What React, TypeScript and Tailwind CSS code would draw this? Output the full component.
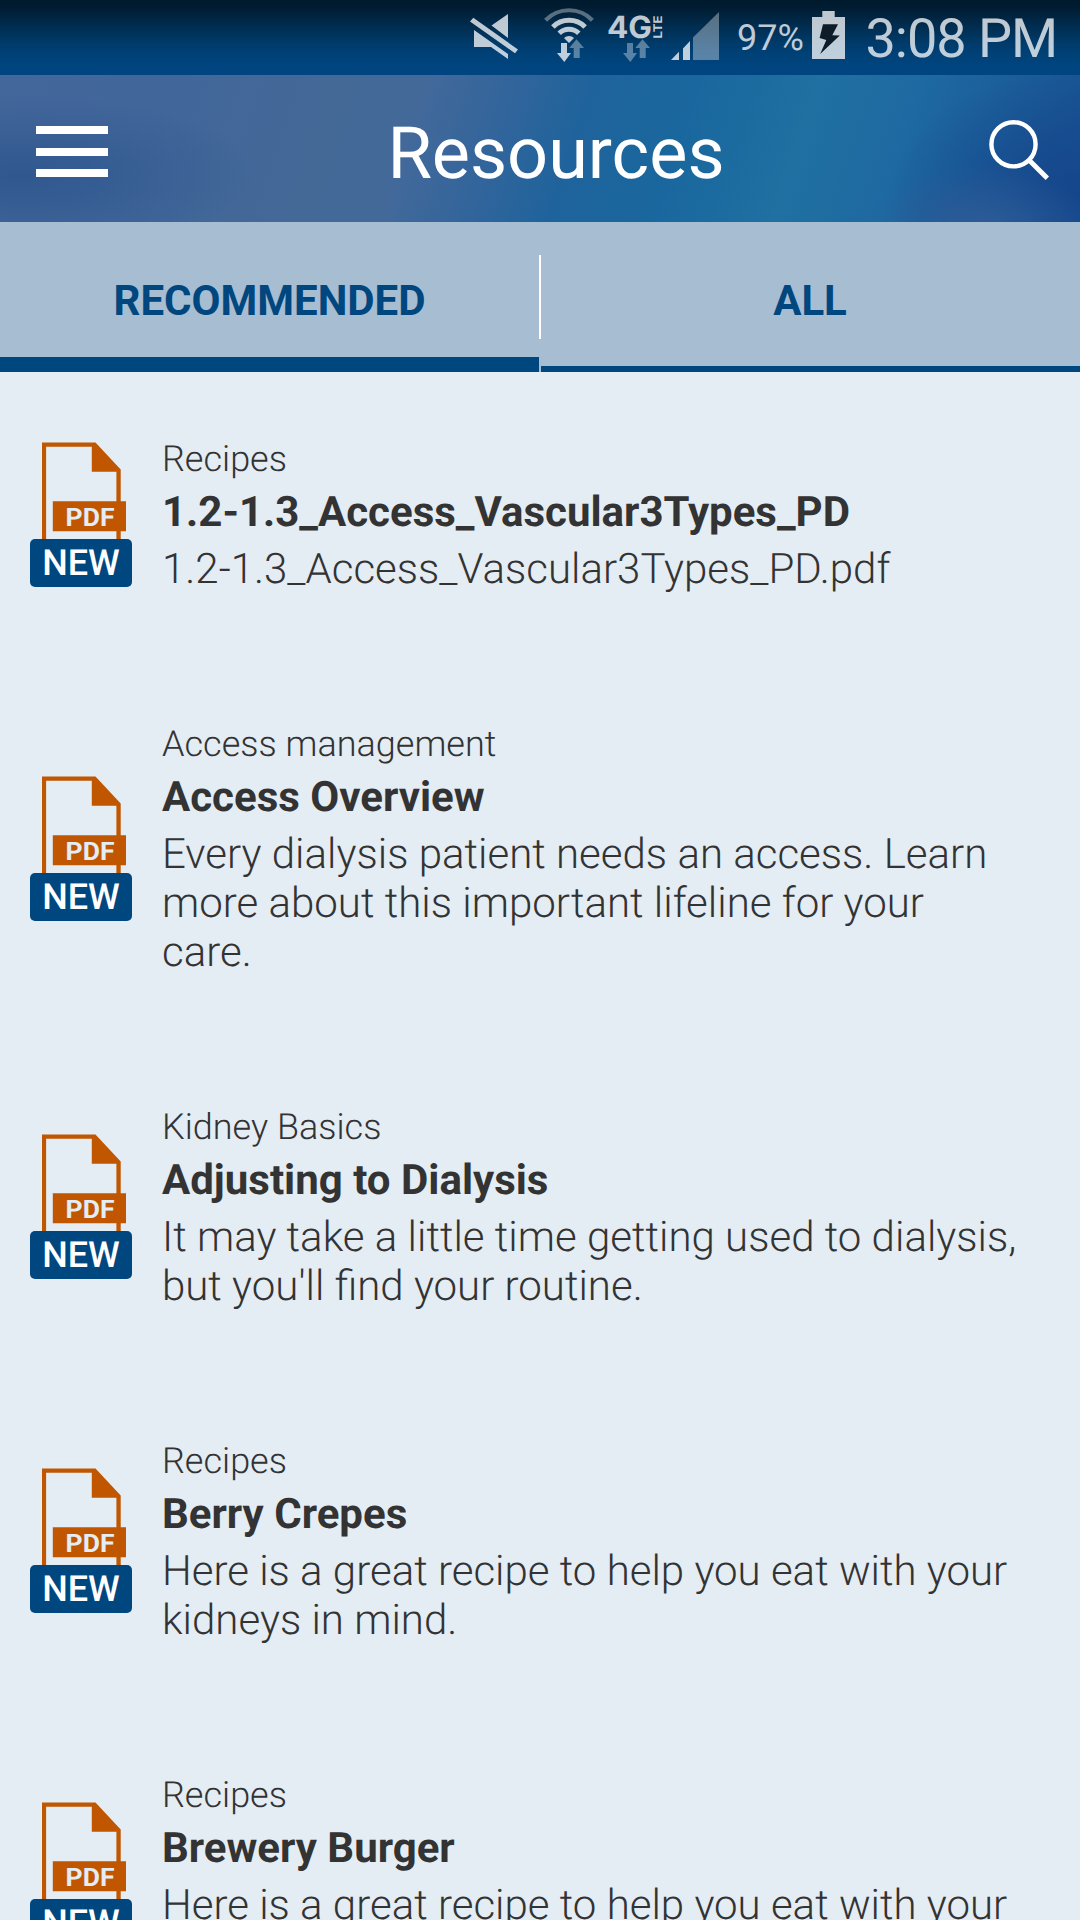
import React from "react";

type Resource = { category: string; title: string; description: string };

const resources: Resource[] = [
  {
    category: "Recipes",
    title: "1.2-1.3_Access_Vascular3Types_PD",
    description: "1.2-1.3_Access_Vascular3Types_PD.pdf",
  },
  {
    category: "Access management",
    title: "Access Overview",
    description:
      "Every dialysis patient needs an access. Learn more about this important lifeline for your care.",
  },
  {
    category: "Kidney Basics",
    title: "Adjusting to Dialysis",
    description: "It may take a little time getting used to dialysis, but you'll find your routine.",
  },
  {
    category: "Recipes",
    title: "Berry Crepes",
    description: "Here is a great recipe to help you eat with your kidneys in mind.",
  },
  {
    category: "Recipes",
    title: "Brewery Burger",
    description: "Here is a great recipe to help you eat with your kidneys in mind.",
  },
];

function MuteIcon() {
  return (
    <svg width="50" height="75" viewBox="470 0 50 75" className="shrink-0 fill-white/75">
      <path d="M508 14V38L491.5 25.5ZM474 30L508 54V59L491 47H474ZM473.3 17.8L518 49.5L515 53.2L470 21.6Z" />
    </svg>
  );
}

function DataArrows({ x, downActive }: { x: number; downActive: boolean }) {
  return (
    <g transform={`translate(${x} 0)`}>
      <path
        d="M4 43H10V53H14L7.3 62L0 53H4Z"
        className={downActive ? "fill-white/75" : "fill-white/35"}
      />
      <path d="M19.5 39.3L27 48H22.7V58H16.7V48H12.3Z" className="fill-white/35" />
    </g>
  );
}

function WifiIcon() {
  return (
    <svg width="52" height="75" viewBox="543 0 52 75" className="shrink-0 fill-none">
      <path d="M545.6 20.2A32.5 32.5 0 0 1 592.4 20.2" className="stroke-white/35" strokeWidth="4.2" />
      <path d="M552.9 26.9A22.8 22.8 0 0 1 585.1 26.9" className="stroke-white/75" strokeWidth="5" />
      <path d="M559.2 33.2A14 14 0 0 1 578.8 33.2" className="stroke-white/75" strokeWidth="5" />
      <path d="M564 38A7 7 0 0 1 574 38L569 43Z" className="fill-white/75" />
      <DataArrows x={557} downActive />
    </svg>
  );
}

function NetworkIcon() {
  return (
    <svg width="58" height="75" viewBox="606 0 58 75" className="shrink-0">
      <text
        x="607"
        y="37.8"
        fontSize="30.5"
        fontWeight="700"
        fontFamily="Inter, sans-serif"
        textLength="45"
        lengthAdjust="spacingAndGlyphs"
        className="fill-white/75"
      >
        4G
      </text>
      <text
        transform="translate(662 38.5) rotate(-90)"
        fontSize="12"
        fontWeight="700"
        fontFamily="Inter, sans-serif"
        textLength="23"
        lengthAdjust="spacingAndGlyphs"
        className="fill-white/75"
      >
        LTE
      </text>
      <DataArrows x={623} downActive={false} />
    </svg>
  );
}

function SignalIcon() {
  return (
    <svg width="49" height="75" viewBox="671 0 49 75" className="shrink-0">
      <path d="M671 60L679 51.7V60ZM683 60V48.5L690 41V60Z" className="fill-white/75" />
      <path d="M693 60V37.5L719 12V60Z" className="fill-white/35" />
    </svg>
  );
}

function BatteryIcon() {
  return (
    <svg width="33" height="75" viewBox="812 0 33 75" className="shrink-0">
      <path d="M812 17H822.3V11H834.7V17H845V59H812Z" className="fill-white/75" />
      <path d="M823 24.2H838L832.3 35.3L839.8 35.6L820.2 54L826.3 40L819.6 38Z" fill="#0e1b28" />
    </svg>
  );
}

function StatusBar() {
  return (
    <div className="flex h-[75px] items-start bg-[linear-gradient(180deg,#001a2d_0px,#001c31_7px,#002a4b_23px,#003a68_42px,#004177_54px,#00457f_66px,#00457f_75px)] pl-[470px] text-white/75">
      <MuteIcon />
      <div className="w-[23px]" />
      <WifiIcon />
      <div className="w-[11px]" />
      <NetworkIcon />
      <div className="w-[7px]" />
      <SignalIcon />
      <span className="ml-[17px] mt-[17px] w-[75px] whitespace-nowrap text-[36px] leading-[42px]">97%</span>
      <BatteryIcon />
      <span className="ml-[20.5px] mt-[8px] whitespace-nowrap text-[54px] leading-[63px] tracking-[-1px]">3:08 PM</span>
    </div>
  );
}

function Header() {
  return (
    <header className="flex h-[147px] items-center bg-[radial-gradient(ellipse_110px_60px_at_980px_150px,#2d5b97_0%,#2d5b9700_100%),radial-gradient(ellipse_190px_120px_at_1080px_115px,#15468b_0%,#15468b00_100%),radial-gradient(ellipse_240px_80px_at_20px_100px,#30588f_0%,#30588f00_100%),linear-gradient(108deg,#43679a_0%,#41669a_15%,#446997_30%,#43699a_38%,#33659b_45%,#1f639c_53%,#19679e_62%,#2070a2_73%,#1e69a1_82%,#184f91_100%)] pl-9 pr-[29px] text-white">
      <button aria-label="Menu" className="mt-1.5 flex w-[72px] flex-col gap-[13.5px]">
        <span className="h-2 bg-white" />
        <span className="h-2 bg-white" />
        <span className="h-2 bg-white" />
      </button>
      <h1 className="mt-2.5 flex-1 pl-[17px] text-center text-[72px] leading-[84px]">Resources</h1>
      <button aria-label="Search" className="mt-[3px]">
        <svg width="64" height="64" viewBox="987 118 64 64" className="fill-none stroke-white">
          <circle cx="1013.5" cy="144.3" r="22.1" strokeWidth="4.4" />
          <path d="M1029 160L1047.3 178.3" strokeWidth="4.8" />
        </svg>
      </button>
    </header>
  );
}

function Tabs() {
  return (
    <nav className="flex h-[150px] bg-[#a6bdd2] text-[42px] font-bold leading-[49px] text-[#00467f]">
      <button className="flex w-[539px] items-center justify-center border-b-[15px] border-[#00467f] pt-[21px]">
        RECOMMENDED
      </button>
      <div className="mt-[33px] h-[84px] w-0.5 bg-white" />
      <button className="flex flex-1 items-center justify-center border-b-[6px] border-[#00467f] pr-px pt-3">
        ALL
      </button>
    </nav>
  );
}

function PdfIcon() {
  return (
    <div className="mb-[0.6px] flex h-[145px] w-[102px] shrink-0 flex-col">
      <svg width="102" height="97" viewBox="30 442 102 97">
        <path
          d="M42 442.4H95.5L120.7 469.5V539H116.4V471.7H91.8V446.8H46.1V539H42Z"
          fill="#c05600"
        />
        <path d="M52.8 501.2H126V531.2H52.8Z" fill="#c05600" />
        <text
          x="65.5"
          y="525.5"
          fontSize="25.5"
          fontWeight="700"
          fontFamily="Roboto, sans-serif"
          textLength="49"
          lengthAdjust="spacingAndGlyphs"
          fill="#e4ecf4"
        >
          PDF
        </text>
      </svg>
      <span className="flex h-12 items-center justify-center rounded-[5px] bg-[#00467f] text-[36px] font-medium leading-[42px] text-white">
        NEW
      </span>
    </div>
  );
}

function ResourceRow({ category, title, description }: Resource) {
  return (
    <li className="flex items-center py-[63px] pl-[30px] pr-[60px] text-[#333333]">
      <PdfIcon />
      <div className="ml-[30px] flex-1 pt-[3px]">
        <p className="text-[36px] font-light leading-[42px]">{category}</p>
        <h2 className="mt-2 text-[42px] font-bold leading-[49px]">{title}</h2>
        <p className="mt-2 text-[42px] font-light leading-[49px]">{description}</p>
      </div>
    </li>
  );
}

export default function App() {
  return (
    <div className="h-[1920px] w-[1080px] overflow-hidden bg-[#e4ecf4] font-[Roboto,sans-serif] [text-rendering:geometricPrecision]">
      <StatusBar />
      <Header />
      <Tabs />
      <ul>
        {resources.map((resource) => (
          <ResourceRow key={resource.title} {...resource} />
        ))}
      </ul>
    </div>
  );
}
